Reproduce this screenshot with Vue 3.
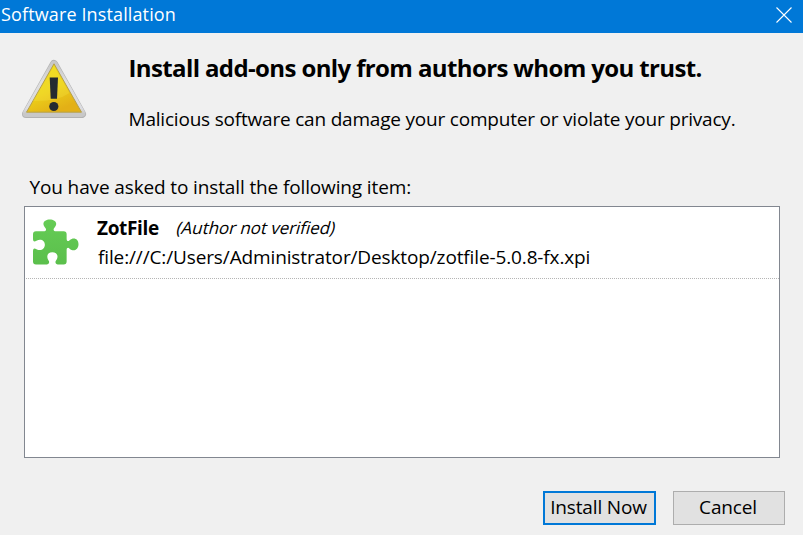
<script setup>
const item = {
  name: 'ZotFile',
  note: '(Author not verified)',
  url: 'file:///C:/Users/Administrator/Desktop/zotfile-5.0.8-fx.xpi',
}
</script>

<template>
  <div class="window">
    <header class="titlebar">
      <span class="title">Software Installation</span>
      <svg class="close" width="16" height="16" viewBox="0 0 16 16">
        <path d="M.5 .5L15.5 15.5M15.5 .5L.5 15.5" stroke="#fff" stroke-width="1.1" />
      </svg>
    </header>
    <main class="body">
      <section class="warning">
        <svg class="warn-icon" width="68" height="62" viewBox="0 0 68 62">
          <defs>
            <linearGradient id="rim" x1="0" y1="0" x2="0" y2="1">
              <stop offset="0" stop-color="#c8c8c8" />
              <stop offset=".35" stop-color="#dededf" />
              <stop offset=".9" stop-color="#dcdce0" />
              <stop offset="1" stop-color="#c8c8c8" />
            </linearGradient>
            <linearGradient id="face" x1="0" y1="0" x2=".5" y2="1">
              <stop offset="0" stop-color="#f0dc12" />
              <stop offset=".6" stop-color="#ecd01a" />
              <stop offset="1" stop-color="#e3b016" />
            </linearGradient>
          </defs>
          <path d="M34 5L62 55H6Z" fill="#b2b2b2" stroke="#b2b2b2" stroke-width="8" stroke-linejoin="round" />
          <path d="M34 5.300L61.800 54.500H6.200Z" fill="url(#rim)" stroke="url(#rim)" stroke-width="7" stroke-linejoin="round" />
          <path d="M34 4.800L61.500 53.200H6.500Z" fill="url(#face)" stroke="#b5a04a" stroke-width="1" stroke-linejoin="round" />
          <path d="M34 7L49.500 34Q36 43 13 42Z" fill="#fff45a" opacity=".2" />
          <path d="M29.700 18.500H38L37 39.700H30.700Z" fill="#252b31" />
          <circle cx="33.800" cy="47.500" r="4.600" fill="#252b31" />
        </svg>
        <div class="copy">
          <h1>Install add-ons only from authors whom you trust.</h1>
          <p>Malicious software can damage your computer or violate your privacy.</p>
        </div>
      </section>
      <p class="asked">You have asked to install the following item:</p>
      <div class="list">
        <div class="item">
          <svg class="puzzle" width="46" height="46" viewBox="0 0 46.500 46.500">
            <defs>
              <linearGradient id="green" x1="0" y1="0" x2="0" y2="1">
                <stop offset="0" stop-color="#65cc55" />
                <stop offset="1" stop-color="#5bbf4c" />
              </linearGradient>
            </defs>
            <path fill="url(#green)" d="M3 12.500H10.500C13 12.500 14 10.500 12.500 9C8 4 12 .5 17 .5C22 .5 26 4 21.500 9C20 10.500 21 12.500 23.500 12.500H31Q34 12.500 34 15.500V20C34 22.500 35.500 23 37 21.500C41 18 46 20 46 25.500C46 31 41 33.500 37 30C35.500 28.500 34 29 34 31.500V43Q34 46 31 46H26.500C23.500 46 22 44.500 23 42.500C26.500 38 24.500 33.500 19.500 33.500C14.500 33.500 13 38 16 42.500C17 44.500 15.500 46 12.500 46H3Q0 46 0 43V33C0 30 1 29 3.500 30.500C8 33 12 30 12 26C12 22 8 19.500 3.500 22C1 23.500 0 22.500 0 20V15.500Q0 12.500 3 12.500Z" />
          </svg>
          <div class="details">
            <div class="line">
              <span class="name">{{ item.name }}</span>
              <span class="note">{{ item.note }}</span>
            </div>
            <div class="line"><span class="url">{{ item.url }}</span></div>
          </div>
        </div>
      </div>
      <footer class="actions">
        <button class="primary">Install Now</button>
        <button>Cancel</button>
      </footer>
    </main>
  </div>
</template>

<style>
body { margin: 0; background: #f0f0f0; overflow: hidden; }
</style>

<style scoped>
* { box-sizing: border-box; }
.window {
  width: 803px; height: 535px; display: flex; flex-direction: column;
  background: #f0f0f0; color: #000; white-space: nowrap;
  font: 19px/26px "Open Sans", "Noto Sans", sans-serif;
}
.titlebar {
  height: 33px; flex: none; display: flex; justify-content: space-between;
  background: #0078d7; color: #fff; padding: 1px 11px 0 1px;
}
.close { margin-top: 6px; }
.title { font-size: 18px; letter-spacing: .13px; }
.body { flex: 1; display: flex; flex-direction: column; padding: 26px 18px 10px 20px; }
.warning { display: flex; gap: 40.500px; height: 115px; }
h1, p { margin: 0; }
h1 { font-size: 24px; line-height: 32px; margin-top: -7px; letter-spacing: -.62px; }
.copy p { margin-top: 22px; letter-spacing: -.2px; }
.asked { padding-left: 9.500px; height: 32px; letter-spacing: -.13px; }
.list { height: 252px; margin: 0 5px 0 4px; background: #fff; border: 1px solid #828790; flex: none; }
.item { display: flex; gap: 18px; height: 72px; margin-left: 1px; padding: 12px 0 0 7px; border-bottom: 1px dotted #b5b5b5; }
.details { margin-top: -4px; }
.line { height: 29px; display: flex; gap: 18px; }
.name { font-weight: 700; letter-spacing: -.33px; }
/* Slanted upright letterforms rather than the cursive italic face */
.note { height: 26px; font-size: 17px; letter-spacing: -.06px; transform: skewX(-15deg); }
.url { margin-left: 1px; letter-spacing: -.13px; }
.actions { display: flex; justify-content: flex-end; gap: 17px; margin-top: 33px; }
button {
  width: 112px; height: 34px; padding: 0 2px 2px 0; border: 1px solid #adadad;
  background: #e1e1e1; font: inherit; color: #000; letter-spacing: -.15px;
}
.primary { width: 113px; border: 2px solid #0078d7; }
</style>
